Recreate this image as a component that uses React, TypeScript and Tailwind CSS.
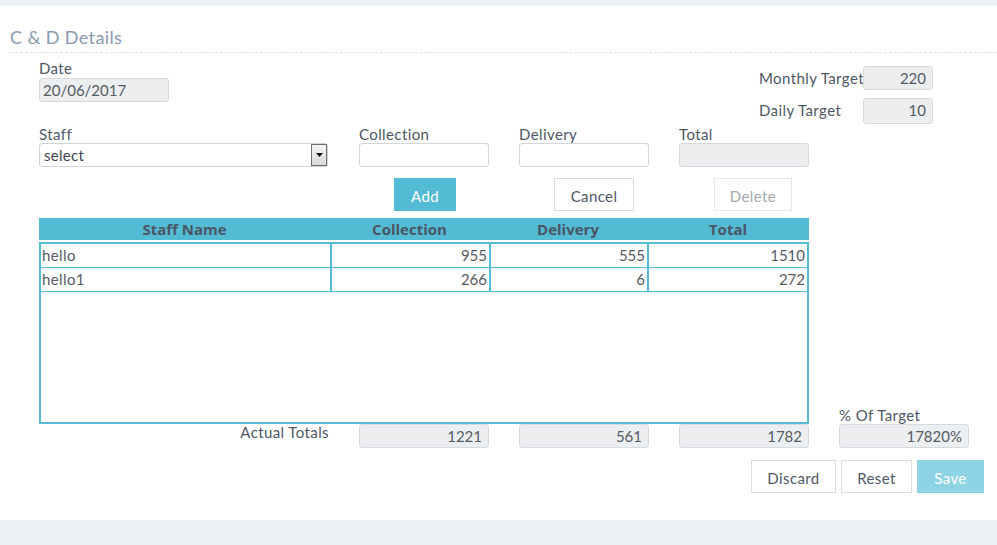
const font = { fontFamily: 'Lato, "Open Sans", sans-serif' };

function ReadOnlyBox({ value, className = '' }: { value?: string; className?: string }) {
  return (
    <div
      className={`h-[24px] rounded-[3px] border border-[#d6d9dd] bg-[#eceef0] pr-[6px] text-right text-[15px] leading-[23px] text-[#555b63] ${className}`}
    >
      {value}
    </div>
  );
}

function Field({ label, children, className = '' }: { label: string; children: React.ReactNode; className?: string }) {
  return (
    <div className={`flex flex-col ${className}`}>
      <span className="text-[15px] leading-[18px] tracking-[0.4px] text-[#4e5766]">{label}</span>
      {children}
    </div>
  );
}

const rows = [
  { name: 'hello', collection: 955, delivery: 555, total: 1510 },
  { name: 'hello1', collection: 266, delivery: 6, total: 272 },
];

export default function App() {
  return (
    <div className="min-h-[545px] bg-[#eef1f4] pt-[6px]" style={font}>
      <div className="h-[514px] bg-white pl-[10px]">
        <div className="border-b border-dashed border-[#e1e4e8] pt-[19px] pb-[3px] text-[18px] leading-[24px] tracking-[0.4px] text-[#8a9ab0]">
          C &amp; D Details
        </div>

        <div className="pl-[29px]">
          {/* date + targets */}
          <div className="flex items-start">
            <Field label="Date" className="mt-[6px] w-[130px]">
              <div className="mt-[1px] h-[24px] rounded-[3px] border border-[#d6d9dd] bg-[#eceef0] pl-[3px] text-[15px] leading-[23px] text-[#555b63]">
                20/06/2017
              </div>
            </Field>
            <div className="mt-[13px] ml-[590px] flex flex-col gap-[8px]">
              <div className="flex items-center">
                <span className="w-[104px] whitespace-nowrap text-[15px] leading-[18px] tracking-[0.4px] text-[#4e5766]">
                  Monthly Target
                </span>
                <ReadOnlyBox value="220" className="w-[70px]" />
              </div>
              <div className="flex items-center">
                <span className="-mt-[2px] w-[104px] text-[15px] leading-[18px] tracking-[0.4px] text-[#4e5766]">Daily Target</span>
                <ReadOnlyBox value="10" className="h-[26px] w-[70px]" />
              </div>
            </div>
          </div>

          {/* entry row */}
          <div className="mt-[1px] flex items-start">
            <Field label="Staff" className="w-[289px]">
              <div className="relative h-[24px] rounded-[3px] border border-[#cfd3d7] bg-white pl-[4px] text-[15px] leading-[23px] tracking-[0.3px] text-[#3f4650]">
                select
                <div className="absolute top-[0px] right-[0px] flex h-[22px] w-[16px] items-center justify-center border border-[#6e6e6e] bg-gradient-to-b from-[#f4f4f4] to-[#d9d9d9]">
                  <svg width="7" height="4" viewBox="0 0 7 4">
                    <path d="M0 0h7L3.5 4z" fill="#111" />
                  </svg>
                </div>
              </div>
            </Field>
            <Field label="Collection" className="ml-[31px] w-[130px]">
              <div className="h-[24px] rounded-[3px] border border-[#d3d6da] bg-white" />
            </Field>
            <Field label="Delivery" className="ml-[30px] w-[130px]">
              <div className="h-[24px] rounded-[3px] border border-[#d3d6da] bg-white" />
            </Field>
            <Field label="Total" className="ml-[30px] w-[130px]">
              <ReadOnlyBox />
            </Field>
          </div>

          {/* actions */}
          <div className="mt-[11px] flex items-start">
            <button className="ml-[355px] h-[33px] w-[62px] bg-[#53bbd3] pt-[3px] text-[15px] tracking-[0.4px] text-white">Add</button>
            <button className="ml-[98px] h-[33px] w-[80px] border border-[#d8dde3] bg-white pt-[3px] text-[15px] tracking-[0.4px] text-[#4e5766]">
              Cancel
            </button>
            <button className="ml-[80px] h-[33px] w-[78px] border border-[#e6e9ec] bg-white pt-[3px] text-[15px] tracking-[0.4px] text-[#a3a9b0]">
              Delete
            </button>
          </div>

          {/* table */}
          <div className="mt-[7px] w-[770px]">
            <div
              className="grid h-[22px] grid-cols-[291px_159px_158px_1fr] bg-[#53bbd3] text-center text-[15px] leading-[22px] font-bold text-[#4a5566]"
              style={{ fontFamily: '"Open Sans", Lato, sans-serif' }}
            >
              <span>Staff Name</span>
              <span>Collection</span>
              <span>Delivery</span>
              <span>Total</span>
            </div>
            <div className="mt-[2px] h-[182px] border-2 border-[#53bbd3]">
              {rows.map((r) => (
                <div
                  key={r.name}
                  className="grid h-[24px] grid-cols-[289px_157px_156px_1fr] gap-x-[2px] border-b-2 border-[#53bbd3] bg-[#53bbd3] text-[15px] leading-[23px] text-[#555b63]"
                >
                  <span className="bg-white pl-[1px] tracking-[0.4px]">{r.name}</span>
                  <span className="bg-white pr-[2px] text-right">{r.collection}</span>
                  <span className="bg-white pr-[2px] text-right">{r.delivery}</span>
                  <span className="bg-white pr-[2px] text-right">{r.total}</span>
                </div>
              ))}
            </div>
          </div>

          {/* totals */}
          <div className="flex items-start">
            <div className="w-[320px] pr-[30px] text-right text-[15px] leading-[17px] tracking-[0.4px] text-[#4e5766]">Actual Totals</div>
            <ReadOnlyBox value="1221" className="w-[130px]" />
            <ReadOnlyBox value="561" className="ml-[30px] w-[130px]" />
            <ReadOnlyBox value="1782" className="ml-[30px] w-[130px]" />
            <div className="-mt-[18px] ml-[30px] flex w-[130px] flex-col">
              <span className="text-[15px] leading-[18px] tracking-[0.4px] text-[#4e5766]">% Of Target</span>
              <ReadOnlyBox value="17820%" />
            </div>
          </div>

          <div className="mt-[12px] flex items-start">
            <button className="ml-[712px] h-[33px] w-[85px] border border-[#d8dde3] bg-white pt-[3px] text-[15px] tracking-[0.4px] text-[#4e5766]">
              Discard
            </button>
            <button className="ml-[5px] h-[33px] w-[71px] border border-[#d8dde3] bg-white pt-[3px] text-[15px] tracking-[0.4px] text-[#4e5766]">
              Reset
            </button>
            <button className="ml-[5px] h-[33px] w-[67px] bg-[#8fd4e4] pt-[3px] text-[15px] tracking-[0.4px] text-white">Save</button>
          </div>
        </div>
      </div>
    </div>
  );
}
